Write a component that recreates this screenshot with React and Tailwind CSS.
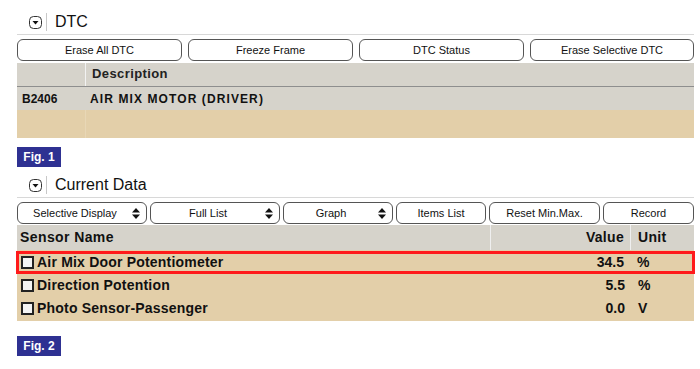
import React from "react";

const font = { fontFamily: '"Liberation Sans", Arial, sans-serif' };

function DropIcon() {
  return (
    <svg width="13" height="13" viewBox="0 0 13 13" className="block">
      <rect x="0.5" y="0.5" width="12" height="12" rx="4" fill="#fff" stroke="#333" strokeWidth="1" />
      <path d="M3.5 5 L9.5 5 L6.5 8.5 Z" fill="#111" />
    </svg>
  );
}

function SectionTitle({ children }) {
  return (
    <div className="flex items-center h-[20px] pl-[12px]">
      <DropIcon />
      <div className="w-px h-[18px] bg-[#c8c8c8] ml-[4px] mr-[8px]" />
      <span className="text-[16px] leading-none text-[#111]">{children}</span>
    </div>
  );
}

function Btn({ children, w, select }) {
  return (
    <div
      className={`${w} h-[22px] shrink-0 rounded-[6px] border border-[#555] bg-white flex items-center justify-center relative text-[11px] text-[#111]`}
    >
      <span className={select ? "pr-[14px]" : ""}>{children}</span>
      {select && (
        <svg width="8" height="11" viewBox="0 0 8 11" className="absolute right-[6px] top-[5px]">
          <path d="M4 0 L8 4.5 L0 4.5 Z" fill="#111" />
          <path d="M0 6.5 L8 6.5 L4 11 Z" fill="#111" />
        </svg>
      )}
    </div>
  );
}

function Fig({ children }) {
  return (
    <div className="w-[44px] h-[20px] bg-[#2e3192] text-white font-bold text-[12px] flex items-center justify-center">
      {children}
    </div>
  );
}

function Check() {
  return <div className="w-[13px] h-[13px] border-2 border-[#222] bg-[#f4f4f4] shrink-0" />;
}

function DataRow({ name, value, unit, hl }) {
  return (
    <div
      className={`flex items-center h-[23px] ${hl ? "border-[3px] border-[#ff1a1a] -mx-[1px]" : "border-[3px] border-transparent"}`}
    >
      <div className={`flex items-center gap-[3px] ${hl ? "pl-[2px]" : "pl-[1px]"} w-[472px] shrink-0`}>
        <Check />
        <span className="font-bold text-[14px] text-[#111] tracking-[0.2px]">{name}</span>
      </div>
      <div className="w-[137px] text-right pr-[4px] font-bold text-[14px] text-[#111]">{value}</div>
      <div className="pl-[9px] font-bold text-[14px] text-[#111]">{unit}</div>
    </div>
  );
}

export default function App() {
  return (
    <div className="w-[700px] h-[369px] bg-white overflow-hidden" style={font}>
      <div className="pl-[17px] pr-[6px] pt-[12px]">
        <SectionTitle>DTC</SectionTitle>
        <div className="h-px bg-[#d8d8d8] mt-[2px]" />
        <div className="flex gap-[6px] mt-[4px]">
          <Btn w="w-[165px]">Erase All DTC</Btn>
          <Btn w="w-[165px]">Freeze Frame</Btn>
          <Btn w="w-[165px]">DTC Status</Btn>
          <Btn w="w-[164px]">Erase Selective DTC</Btn>
        </div>
        <div className="mt-[2px]">
          <div className="flex h-[24px] bg-[#d6d3cb] border-b border-[#8e8e8e]">
            <div className="w-[69px] border-r border-[#f2f2f2]" />
            <div className="pl-[6px] pb-[2px] flex items-center font-bold text-[13px] text-[#222] tracking-[0.4px]">Description</div>
          </div>
          <div className="flex h-[23px] bg-[#d6d3cb] items-center">
            <div className="w-[69px] pl-[5px] font-bold text-[12px] text-[#111]">B2406</div>
            <div className="pl-[4px] font-bold text-[12px] text-[#111] tracking-[1.1px]">AIR MIX MOTOR (DRIVER)</div>
          </div>
          <div className="flex h-[28px] bg-[#e3cfa9]">
            <div className="w-[69px] border-r border-[#e8d7b6]" />
          </div>
        </div>
        <div className="mt-[9px]">
          <Fig>Fig. 1</Fig>
        </div>
        <div className="mt-[8px]">
          <SectionTitle>Current Data</SectionTitle>
        </div>
        <div className="h-px bg-[#d8d8d8] mt-[2px]" />
        <div className="flex gap-[3px] mt-[4px]">
          <Btn w="w-[130px]" select>Selective Display</Btn>
          <Btn w="w-[130px]" select>Full List</Btn>
          <Btn w="w-[110px]" select>Graph</Btn>
          <Btn w="w-[90px]">Items List</Btn>
          <Btn w="w-[111px]">Reset Min.Max.</Btn>
          <Btn w="w-[91px]">Record</Btn>
        </div>
        <div className="mt-[1px]">
          <div className="flex h-[25px] bg-[#d6d3cb] items-center">
            <div className="w-[474px] pl-[3px] font-bold text-[14px] tracking-[0.4px] text-[#111] self-stretch flex items-center border-r border-[#efefef]">
              Sensor Name
            </div>
            <div className="w-[140px] text-right pr-[6px] font-bold text-[14px] tracking-[0.3px] text-[#111] self-stretch flex items-center justify-end border-r border-[#efefef]">
              Value
            </div>
            <div className="pl-[7px] font-bold text-[14px] tracking-[0.3px] text-[#111]">Unit</div>
          </div>
          <div className="bg-[#e3cfa9] pt-[1px] pb-[1px]">
            <DataRow name="Air Mix Door Potentiometer" value="34.5" unit="%" hl />
            <DataRow name="Direction Potention" value="5.5" unit="%" />
            <DataRow name="Photo Sensor-Passenger" value="0.0" unit="V" />
          </div>
        </div>
        <div className="mt-[15px]">
          <Fig>Fig. 2</Fig>
        </div>
      </div>
    </div>
  );
}
